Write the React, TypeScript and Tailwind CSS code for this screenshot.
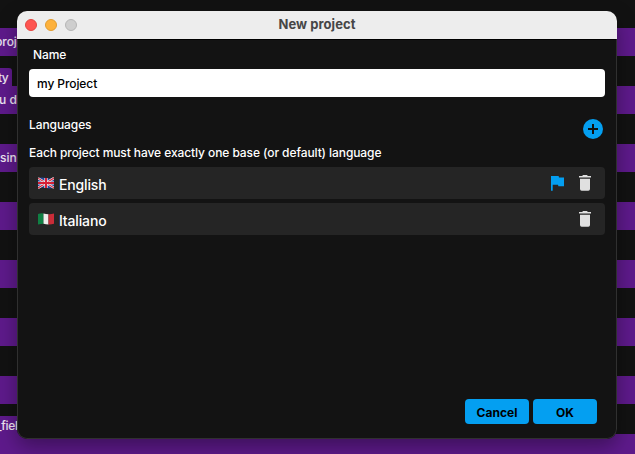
import type { ReactNode } from "react";

const band = "h-7 shrink-0 bg-[#5e1a8b]";

function Band({ children }: { children?: ReactNode }) {
  return (
    <div className={`${band} mb-[30px] text-[12px] leading-7 font-medium whitespace-nowrap text-white/90`}>
      {children}
    </div>
  );
}

function Backdrop() {
  return (
    <div className="flex h-full flex-col bg-[#121212] pt-7">
      <div className="h-7 shrink-0 bg-[#5e1a8b] text-[12px] leading-7 font-medium text-white/90">
        <span className="-ml-[5px] tracking-[-0.1px]">project</span>
      </div>
      <div className="mt-3 flex h-[18px] w-3 shrink-0 items-center justify-end rounded-tr-[3px] bg-[#5e1a8b] pt-0.5 pr-1 text-[12px] font-medium tracking-[-0.6px] text-white/90">
        ty
      </div>
      <Band><span className="-ml-px">u d</span></Band>
      <Band><span>sin-</span></Band>
      <Band />
      <Band />
      <Band />
      <div className={band} />
      <div className="mt-3 h-[18px] w-[120px] shrink-0 bg-[#5e1a8b] text-[12px] leading-5 font-medium text-white/90">
        <span className="-ml-1 tracking-[-0.3px]">_field</span>
      </div>
      <div className="h-5 shrink-0 bg-[#5e1a8b]" />
    </div>
  );
}

function UkFlag() {
  return (
    <svg width="16" height="12" viewBox="0 0 16 12">
      <path d="M0 1Q4 0 8 1T16 .7V10.8Q12 12 8 11T0 11.3Z" fill="#24479b" />
      <path d="M0 1.2 16 10.8M16 1 0 11" stroke="#eee" strokeWidth="2.4" />
      <path d="M0 1.2 16 10.8M16 1 0 11" stroke="#d8283b" strokeWidth="1.1" />
      <path d="M8 1V11M0 6H16" stroke="#f4f4f4" strokeWidth="3.2" />
      <path d="M8 1V11M0 6H16" stroke="#d51f36" strokeWidth="2" />
    </svg>
  );
}

function ItalyFlag() {
  return (
    <svg width="16" height="12" viewBox="0 0 16 12">
      <path d="M0 1Q3 0 5.5.5V10.8Q3 10.8 0 11.5Z" fill="#108044" />
      <path d="M5.5.5Q8 1 10.5 1.2V11.4Q8 11.4 5.5 10.8Z" fill="#eeeeec" />
      <path d="M10.5 1.2Q13 1.4 16 .6V10.8Q13 11.6 10.5 11.4Z" fill="#c92c38" />
    </svg>
  );
}

function TrashIcon() {
  return (
    <svg width="12" height="16" viewBox="0 0 12 16" fill="#e0e0e0">
      <path d="M0 1h3.2L4 0h4l.8 1H12v1.6H0ZM1 3.7h10V14q0 1.7-1.7 1.7H2.7Q1 15.7 1 14Z" />
    </svg>
  );
}

function LanguageRow({ flag, name, base }: { flag: ReactNode; name: string; base?: boolean }) {
  return (
    <div className="flex h-8 items-center rounded bg-[#252525] pr-3.5 pl-[9px]">
      <span className="mb-px">{flag}</span>
      <span className="mt-1 ml-[5px] text-[14px] leading-5 font-medium tracking-[-0.15px]">{name}</span>
      <span className="ml-auto flex items-center">
        {base && (
          <svg className="mr-[15px]" width="13" height="15" viewBox="0 0 13 15" fill="#049ff1">
            <path d="M0 0h7.6l.4 1.5h5v8.8H7.4L7 8.7H1.7v6H0Z" />
          </svg>
        )}
        <TrashIcon />
      </span>
    </div>
  );
}

function ProjectWindow() {
  return (
    <div className="absolute top-[11px] left-[17px] flex h-[428px] w-[600px] flex-col overflow-hidden rounded-[10px] bg-[#131313] text-white shadow-[0_8px_20px_rgba(0,0,0,0.35)]">
      <div className="grid h-7 shrink-0 grid-cols-[1fr_auto_1fr] items-center bg-[#ededed] px-2">
        <div className="flex gap-2">
          <i className="size-3 rounded-full border border-[#e24640] bg-[#fe5450]" />
          <i className="size-3 rounded-full border border-[#e09b2f] bg-[#fdb13c]" />
          <i className="size-3 rounded-full border border-[#b5b5b5] bg-[#cecece]" />
        </div>
        <span className="text-[13px] font-bold tracking-[0.05px] text-[#464646]">New project</span>
      </div>
      <div className="flex flex-1 flex-col rounded-b-[10px] border border-t-black border-[#303030] px-[11px] text-[12px] font-medium tracking-[-0.085px]">
        <label className="mt-[7px] ml-1 leading-4">Name</label>
        <div className="mt-[6px] h-7 rounded bg-white px-2 pt-px leading-7 text-black">my Project</div>
        <div className="mt-5 flex h-6 justify-between pr-[2px]">
          <span className="leading-4">Languages</span>
          <svg className="mt-[2px]" width="20" height="20" viewBox="0 0 20 20">
            <circle cx="10" cy="10" r="10" fill="#049ff1" />
            <path d="M10 5v10M5 10h10" stroke="#101010" strokeWidth="2" />
          </svg>
        </div>
        <p className="mt-1 leading-4">Each project must have exactly one base (or default) language</p>
        <div className="mt-[6px] flex flex-col gap-1">
          <LanguageRow flag={<UkFlag />} name="English" base />
          <LanguageRow flag={<ItalyFlag />} name="Italiano" />
        </div>
        <div className="mt-auto mb-[14px] flex justify-end gap-1 pr-2 font-bold tracking-normal text-black">
          <button className="h-[25px] w-16 rounded bg-[#049ff1] pt-[3px]">Cancel</button>
          <button className="h-[25px] w-16 rounded bg-[#049ff1] pt-[3px]">OK</button>
        </div>
      </div>
    </div>
  );
}

export default function App() {
  return (
    <main className="relative h-[454px] w-[635px] overflow-hidden font-['Inter',sans-serif]">
      <Backdrop />
      <ProjectWindow />
    </main>
  );
}
